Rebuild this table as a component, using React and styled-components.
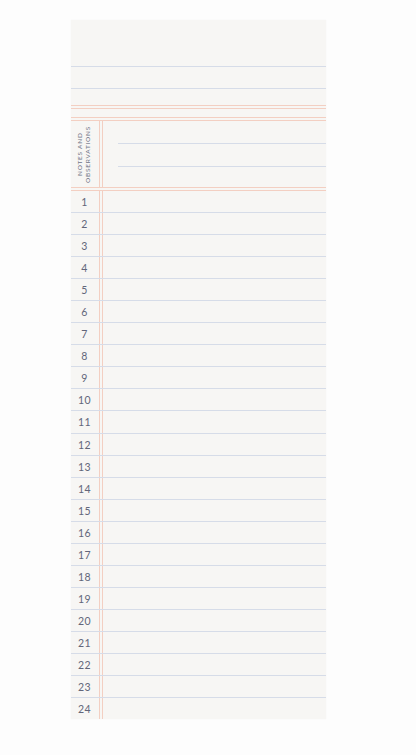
import React from 'react'
import styled, { createGlobalStyle } from 'styled-components'

const blue = '#d6dce8'
const peach = '#f3cfc2'

const GlobalStyle = createGlobalStyle`
    html, body {
        margin: 0;
        padding: 0;
        background: #fdfdfd;
    }
    body {
        font-family: Lato, 'Open Sans', sans-serif;
    }
`

const Page = styled.div`
    width: 416px;
    height: 755px;
    box-sizing: border-box;
    padding: 20px 0 0 71px;
`

const Pad = styled.div`
    width: 255px;
    height: 699px;
    background: #f7f6f4;
    display: flex;
    flex-direction: column;
    box-shadow: 0 0 1px rgba(0, 0, 0, 0.06);
`

const Header = styled.div`
    flex: none;
    height: 47px;
    box-sizing: border-box;
    border-bottom: 1px solid ${blue};
`

const TopLine = styled.div`
    flex: none;
    height: 22px;
    box-sizing: border-box;
    border-bottom: 1px solid ${blue};
`

const Spacer = styled.div`
    flex: none;
    height: ${(p) => p.h}px;
`

const DoubleRule = styled.div`
    flex: none;
    height: 4px;
    box-sizing: border-box;
    border-top: 1px solid ${peach};
    border-bottom: 1px solid ${peach};
`

const Notes = styled.div`
    flex: none;
    height: 70px;
    box-sizing: border-box;
    display: flex;
    border-bottom: 4px double ${peach};
`

const LabelCell = styled.div`
    width: 32px;
    flex: none;
    box-sizing: border-box;
    border-right: 4px double ${peach};
    display: flex;
    align-items: center;
    justify-content: center;
    padding-right: 2px;
`

const Label = styled.div`
    writing-mode: vertical-rl;
    transform: rotate(180deg);
    text-align: center;
    font-size: 6.5px;
    line-height: 8px;
    letter-spacing: 0.75px;
    color: #6e7284;
    white-space: nowrap;
`

const NoteLines = styled.div`
    flex: 1;
    padding-left: 15px;
`

const NoteLine = styled.div`
    height: 23px;
    box-sizing: border-box;
    border-bottom: 1px solid ${blue};
`

const Rows = styled.div`
    flex: 1;
    display: flex;
    flex-direction: column;
`

const Row = styled.div`
    flex: 1;
    display: flex;
    box-sizing: border-box;
    border-bottom: ${(p) => (p.last ? 'none' : `1px solid ${blue}`)};
`

const Num = styled.div`
    width: 32px;
    flex: none;
    box-sizing: border-box;
    border-right: 4px double ${peach};
    display: flex;
    align-items: center;
    justify-content: center;
    padding: 1px 1px 0 0;
    font-size: 10.5px;
    color: #62667a;
    letter-spacing: 0.4px;
`

const App = () => {
    const nums = Array.from({ length: 24 }, (_, i) => i + 1)
    return (
        <Page>
            <GlobalStyle />
            <Pad>
                <Header />
                <TopLine />
                <Spacer h={16} />
                <DoubleRule />
                <Spacer h={8} />
                <DoubleRule />
                <Notes>
                    <LabelCell>
                        <Label>
                            NOTES AND
                            <br />
                            OBSERVATIONS
                        </Label>
                    </LabelCell>
                    <NoteLines>
                        <NoteLine />
                        <NoteLine />
                    </NoteLines>
                </Notes>
                <Rows>
                    {nums.map((n) => (
                        <Row key={n} last={n === 24}>
                            <Num>{n}</Num>
                        </Row>
                    ))}
                </Rows>
            </Pad>
        </Page>
    )
}

export default App
